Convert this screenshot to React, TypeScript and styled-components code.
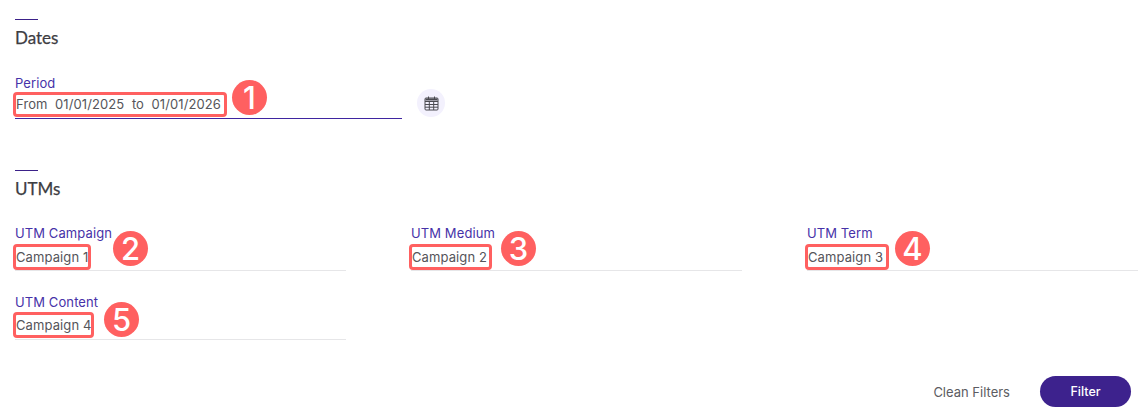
import styled, { createGlobalStyle } from "styled-components";

const GlobalStyle = createGlobalStyle`
    html, body {
        margin: 0;
        padding: 0;
        background: #fff;
    }
`;

const Page = styled.div`
    width: 1148px;
    height: 419px;
    box-sizing: border-box;
    padding: 19px 10px 0 15px;
    font-family: "Inter", "Liberation Sans", sans-serif;
    overflow: hidden;
`;

const Section = styled.section<{ $height: number }>`
    height: ${(p) => p.$height}px;
`;

const SectionRule = styled.div`
    width: 23px;
    height: 1px;
    background: #3b2189;
`;

const SectionTitle = styled.h2`
    margin: 8px 0 0;
    font-family: "Lato", "Liberation Sans", sans-serif;
    font-size: 17px;
    line-height: 20px;
    font-weight: 400;
    color: #3d3d42;
    -webkit-text-stroke: 0.25px #3d3d42;
`;

const PeriodRow = styled.div`
    display: flex;
    align-items: flex-start;
    margin-top: 27px;
`;

const Field = styled.div<{ $active?: boolean; $width: number }>`
    width: ${(p) => p.$width}px;
    height: ${(p) => (p.$active ? 44 : 46)}px;
    box-sizing: border-box;
    border-bottom: 1px solid ${(p) => (p.$active ? "#3f25a0" : "#e6e6e8")};
`;

const FieldLabel = styled.div`
    font-size: 13px;
    line-height: 16px;
    letter-spacing: 0.1px;
    color: #4632a8;
`;

const Highlight = styled.div<{ $top: number; $height: number; $pad: number }>`
    position: relative;
    display: inline-block;
    margin: ${(p) => p.$top}px 0 0 1px;
    padding-right: ${(p) => p.$pad}px;
    height: ${(p) => p.$height}px;
    line-height: ${(p) => p.$height}px;
    font-size: 13px;
    letter-spacing: 0.1px;
    white-space: pre;
    color: #55555a;
    outline: 3.5px solid #ff6060;
    border-radius: 1px;
`;

const Badge = styled.span<{ $left: number; $top: number }>`
    position: absolute;
    left: ${(p) => p.$left}px;
    top: ${(p) => p.$top}px;
    width: 35px;
    height: 35px;
    border-radius: 50%;
    background: #ff6060;
    color: #fff;
    font-family: "Inter", "Liberation Sans", sans-serif;
    font-size: 31px;
    font-weight: 500;
    line-height: 35px;
    letter-spacing: 0;
    text-align: center;
`;

const IconButton = styled.button`
    width: 28px;
    height: 28px;
    margin: 14px 0 0 15px;
    padding: 0;
    border: 0;
    border-radius: 50%;
    background: #f3f1fd;
    display: flex;
    align-items: center;
    justify-content: center;
`;

const FieldGrid = styled.div`
    display: grid;
    grid-template-columns: repeat(3, 331px);
    column-gap: 65px;
    row-gap: 23px;
    margin-top: 26px;
`;

const Actions = styled.div`
    display: flex;
    justify-content: flex-end;
    align-items: center;
    gap: 30px;
    padding-right: 7px;
`;

const CleanButton = styled.button`
    padding: 0;
    border: 0;
    background: none;
    font: 400 13px "Inter", "Liberation Sans", sans-serif;
    color: #5c5c62;
`;

const FilterButton = styled.button`
    width: 91px;
    height: 31px;
    border: 0;
    border-radius: 16px;
    background: #3d228d;
    color: #fff;
    font: 500 12.5px "Inter", "Liberation Sans", sans-serif;
`;

const CalendarIcon = () => (
    <svg width="15" height="15" viewBox="0 0 15 15" fill="none" stroke="#4a4a50" strokeWidth="1">
        <path d="M4.5 0.5v2.5M10.5 0.5v2.5" />
        <rect x="1" y="2" width="13" height="12" rx="1" />
        <path d="M1 5.5h13M1 8.5h13M1 11.2h13M5.3 5.5v8.5M9.7 5.5v8.5" />
        <path d="M1.5 3.5h12" strokeWidth="2" />
    </svg>
);

const utmFields = [
    { label: "UTM Campaign", value: "Campaign 1", badge: 2, left: 97, top: -16, gap: 6, pad: 0 },
    { label: "UTM Medium", value: "Campaign 2", badge: 3, left: 89, top: -16, gap: 6, pad: 2 },
    { label: "UTM Term", value: "Campaign 3", badge: 4, left: 87, top: -16, gap: 6, pad: 3 },
    { label: "UTM Content", value: "Campaign 4", badge: 5, left: 88, top: -13, gap: 5, pad: 0 },
];

export default function App() {
    return (
        <Page>
            <GlobalStyle />
            <Section $height={151}>
                <SectionRule />
                <SectionTitle>Dates</SectionTitle>
                <PeriodRow>
                    <Field $active $width={387}>
                        <FieldLabel>Period</FieldLabel>
                        <Highlight $top={4} $height={19} $pad={3}>
                            {"From  01/01/2025  to  01/01/2026"}
                            <Badge $left={216} $top={-15}>1</Badge>
                        </Highlight>
                    </Field>
                    <IconButton aria-label="Calendar">
                        <CalendarIcon />
                    </IconButton>
                </PeriodRow>
            </Section>
            <Section $height={206}>
                <SectionRule />
                <SectionTitle>UTMs</SectionTitle>
                <FieldGrid>
                    {utmFields.map((f) => (
                        <Field key={f.label} $width={331}>
                            <FieldLabel>{f.label}</FieldLabel>
                            <Highlight $top={f.gap} $height={20} $pad={f.pad}>
                                {f.value}
                                <Badge $left={f.left} $top={f.top}>{f.badge}</Badge>
                            </Highlight>
                        </Field>
                    ))}
                </FieldGrid>
            </Section>
            <Actions>
                <CleanButton>Clean Filters</CleanButton>
                <FilterButton>Filter</FilterButton>
            </Actions>
        </Page>
    );
}
